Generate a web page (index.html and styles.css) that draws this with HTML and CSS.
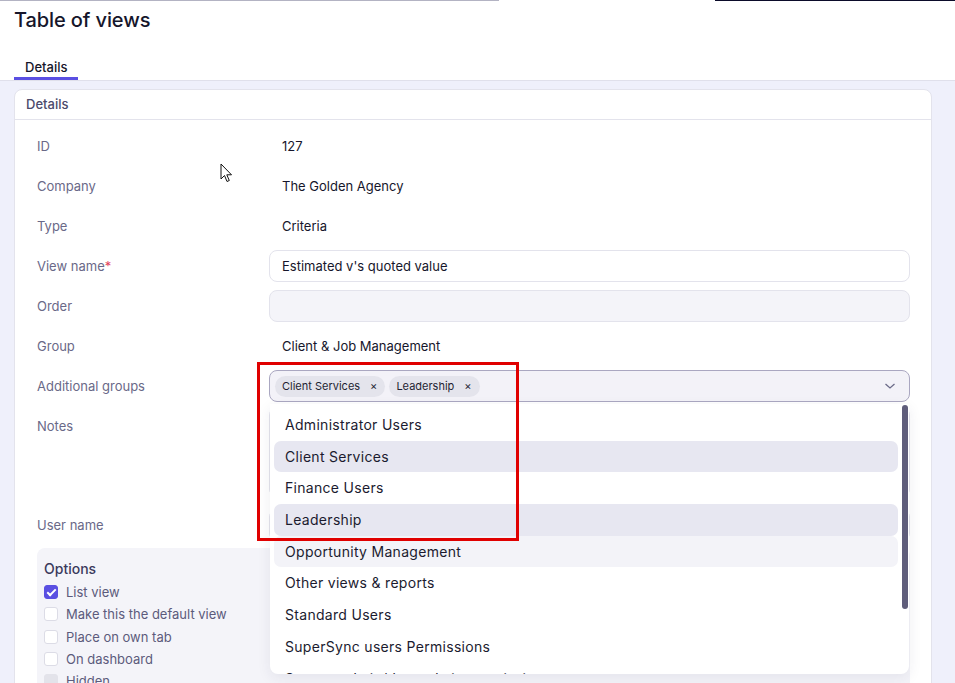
FILE: index.html
```html
<!DOCTYPE html>
<html lang="en">
<head>
  <meta charset="UTF-8" />
  <meta name="viewport" content="width=device-width, initial-scale=1.0"/>
  <title>Table of views</title>
  <link rel="stylesheet" href="styles.css">
</head>
<body>
  <div class="topLine">
    <span class="topLineGray"></span>
    <span class="topLineGap"></span>
    <span class="topLineDark"></span>
  </div>

  <header class="pageHeader">
    <h1>Table of views</h1>
  </header>

  <nav class="tabs">
    <span class="tab active">Details</span>
  </nav>

  <main class="pageBody">
    <section class="card">
      <div class="cardHeader">Details</div>

      <div class="form">
        <div class="formRow">
          <label>ID</label>
          <div class="value">127</div>
        </div>
        <div class="formRow">
          <label>Company</label>
          <div class="value">The Golden Agency</div>
        </div>
        <div class="formRow">
          <label>Type</label>
          <div class="value">Criteria</div>
        </div>
        <div class="formRow">
          <label>View name<span class="required">*</span></label>
          <input type="text" class="field" value="Estimated v's quoted value">
        </div>
        <div class="formRow">
          <label>Order</label>
          <input type="text" class="field empty" value="">
        </div>
        <div class="formRow">
          <label>Group</label>
          <div class="value">Client &amp; Job Management</div>
        </div>
        <div class="formRow">
          <label>Additional groups</label>
          <div class="multiSelect">
            <div class="selectBox">
              <span class="chip">Client Services <span class="chipX">×</span></span>
              <span class="chip">Leadership <span class="chipX">×</span></span>
              <svg class="chevron" width="12" height="8" viewBox="0 0 12 8">
                <path d="M1.5 2 L6 6 L10.5 2" fill="none" stroke="#6b6a88" stroke-width="1.3"/>
              </svg>
            </div>

            <!-- open dropdown list -->
            <div class="dropdown">
              <ul class="options">
                <li>Administrator Users</li>
                <li class="selected">Client Services</li>
                <li>Finance Users</li>
                <li class="selected">Leadership</li>
                <li class="hover">Opportunity Management</li>
                <li>Other views &amp; reports</li>
                <li>Standard Users</li>
                <li>SuperSync users Permissions</li>
                <li>System admin/data admin permissions</li>
              </ul>
              <div class="scrollThumb"></div>
            </div>
          </div>
        </div>
        <div class="formRow notesRow">
          <label>Notes</label>
          <textarea class="field notes"></textarea>
        </div>
        <div class="formRow">
          <label>User name</label>
          <input type="text" class="field" value="">
        </div>

        <div class="optionsPanel">
          <div class="optionsTitle">Options</div>
          <div class="check"><span class="box checked"></span>List view</div>
          <div class="check"><span class="box"></span>Make this the default view</div>
          <div class="check"><span class="box"></span>Place on own tab</div>
          <div class="check"><span class="box"></span>On dashboard</div>
          <div class="check"><span class="box disabled"></span>Hidden</div>
        </div>
      </div>
    </section>
  </main>

  <!-- annotation + mouse pointer captured in the screenshot -->
  <div class="highlightBox"></div>
  <svg class="cursor" width="14" height="21" viewBox="0 0 14 21">
    <path d="M1 1 L1 16 L4.5 12.5 L7 18.5 L9.3 17.5 L6.8 11.8 L11.5 11.8 Z" fill="#fff" stroke="#111" stroke-width="1" stroke-linejoin="round"/>
  </svg>
</body>
</html>
```

FILE: styles.css
```css
/* Colours */
:root {
  --text: #16162b;
  --label: #6a6988;
  --muted: #4b4a6b;
  --border: #e3e3ec;
  --page-bg: #eff0fb;
  --soft-bg: #f4f4f9;
  --accent: #5a4fe2;
  --selected: #e7e7f1;
  --hover: #f3f3f8;
}

html, body {
  margin: 0;
  padding: 0;
  height: 100%;
  overflow: hidden;
}

body {
  font-family: Inter, "Noto Sans", Arial, sans-serif;
  color: var(--text);
  background: var(--page-bg);
  position: relative;
}

/* Leftover strip at the very top */
.topLine {
  display: flex;
  height: 1px;
  background: #fff;
}
.topLineGray { width: 499px; background: #b3b3c3; }
.topLineGap { width: 216px; }
.topLineDark { flex: 1; background: #0b0b2a; }

.pageHeader {
  background: #fff;
  padding: 6px 14px 0;
  height: 32px;
}

.pageHeader h1 {
  margin: 0;
  font-size: 20px;
  font-weight: 500;
  line-height: 26px;
  letter-spacing: -0.1px;
}

.tabs {
  background: #fff;
  padding: 16px 14px 0;
  display: flex;
  border-bottom: 1px solid #e0e0eb;
}

.tab {
  font-size: 13px;
  font-weight: 500;
  line-height: 18px;
  padding: 3px 11px 1px;
  border-bottom: 3px solid transparent;
}

.tab.active {
  border-bottom-color: var(--accent);
}

.pageBody {
  padding: 8px 23px 0 14px;
}

.card {
  background: #fff;
  border: 1px solid var(--border);
  border-radius: 8px 8px 0 0;
  min-height: 700px;
}

.cardHeader {
  height: 29px;
  line-height: 29px;
  padding: 0 11px;
  font-size: 13px;
  font-weight: 500;
  color: var(--muted);
  border-bottom: 1px solid var(--border);
}

.form {
  padding: 6px 21px 0 22px;
}

.formRow {
  display: grid;
  grid-template-columns: 232px 1fr;
  align-items: center;
  min-height: 40px;
}

.formRow label {
  font-size: 13px;
  color: var(--label);
}

.required {
  color: #e2445c;
}

.value {
  font-size: 13px;
  padding-left: 13px;
}

.field {
  box-sizing: border-box;
  height: 32px;
  width: 100%;
  border: 1px solid var(--border);
  border-radius: 8px;
  padding: 0 12px;
  font-family: inherit;
  font-size: 13px;
  color: var(--text);
  background: #fff;
  outline: none;
}

.field.empty {
  background: var(--soft-bg);
}

.notesRow {
  align-items: start;
  min-height: 99px;
}

.notesRow label {
  padding-top: 12px;
}

.field.notes {
  height: 90px;
  margin-top: 1px;
  resize: none;
}

/* Multi select with open list */
.multiSelect {
  position: relative;
}

.selectBox {
  box-sizing: border-box;
  height: 32px;
  display: flex;
  align-items: center;
  gap: 4px;
  padding: 0 5px;
  background: #f3f2f8;
  border: 1px solid #aaa7c1;
  border-radius: 8px;
}

.chip {
  display: inline-flex;
  align-items: center;
  height: 21px;
  padding: 0 8px 0 7px;
  border-radius: 11px;
  background: #e4e4ec;
  font-size: 11px;
  color: #1f1f33;
}

.chipX {
  margin-left: 10px;
  font-size: 11px;
}

.chevron {
  margin-left: auto;
  margin-right: 8px;
}

.dropdown {
  position: absolute;
  top: 34px;
  left: 1px;
  right: 1px;
  height: 270px;
  overflow: hidden;
  background: #fff;
  border-radius: 0 0 8px 8px;
  box-shadow: 0 4px 14px rgba(40, 40, 80, 0.08);
  z-index: 5;
}

.options {
  list-style: none;
  margin: 0;
  padding: 5px 11px 0 4px;
}

.options li {
  height: 31.7px;
  line-height: 31.7px;
  padding-left: 11px;
  border-radius: 7px;
  font-size: 14px;
  letter-spacing: 0.3px;
  color: #1b1b2f;
}

.options li.selected {
  background: var(--selected);
}

.options li.hover {
  background: var(--hover);
}

.scrollThumb {
  position: absolute;
  top: 1px;
  right: 1px;
  width: 6px;
  height: 204px;
  border-radius: 3px;
  background: #5f5d7b;
}

/* Options panel */
.optionsPanel {
  margin-top: 3px;
  background: var(--soft-bg);
  border-radius: 8px;
  padding: 12px 7px 10px;
}

.optionsTitle {
  font-size: 14px;
  font-weight: 500;
  line-height: 18px;
  color: #3b3a5c;
  margin-bottom: 3px;
}

.check {
  display: flex;
  align-items: center;
  height: 22.3px;
  font-size: 13px;
  color: #5c5b7c;
}

.box {
  box-sizing: border-box;
  width: 14px;
  height: 14px;
  margin-right: 8px;
  border: 1px solid #dcdce6;
  border-radius: 3px;
  background: #fff;
}

.box.checked {
  background: var(--accent);
  border-color: var(--accent);
  position: relative;
}

.box.checked::after {
  content: "";
  position: absolute;
  left: 4px;
  top: 1px;
  width: 3px;
  height: 7px;
  border: solid #fff;
  border-width: 0 2px 2px 0;
  transform: rotate(45deg);
}

.box.disabled {
  background: #e3e3ea;
  border-color: #e3e3ea;
}

/* Overlays */
.highlightBox {
  position: absolute;
  left: 257px;
  top: 362px;
  width: 256px;
  height: 173px;
  border: 3px solid #e00000;
  z-index: 10;
}

.cursor {
  position: absolute;
  left: 220px;
  top: 163px;
  z-index: 11;
}
```
